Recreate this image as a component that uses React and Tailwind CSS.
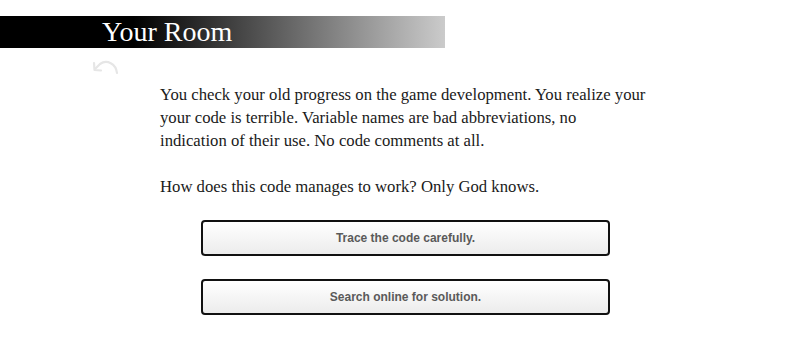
const CHOICES = ["Trace the code carefully.", "Search online for solution."];

function UndoIcon() {
  return (
    <svg width="30" height="22" viewBox="0 0 30 22" fill="none" stroke="#e6e6e6" strokeWidth="2.2" strokeLinecap="round" strokeLinejoin="round">
      <path d="M26 17 C25 8 16 3 9 8 L4 13" />
      <path d="M3 7 L3.5 14 L10 14.5" />
    </svg>
  );
}

export default function App() {
  return (
    <div className="w-[803px] h-[353px] bg-white overflow-hidden">
      {/* Title bar */}
      <div className="mt-4 w-[445px] h-8 bg-[linear-gradient(to_right,#000_0%,#000_30%,#cbcbcb_100%)] flex items-center">
        <h1 className="pl-[102px] text-white text-[28px] leading-8 font-['Liberation_Serif',serif]">Your Room</h1>
      </div>

      <div className="pl-[91px] pt-[8px] h-[22px]">
        <UndoIcon />
      </div>

      {/* Story text */}
      <div className="pl-[160px] pt-[13px] w-[660px] text-[16.7px] leading-[23px] text-[#1a1a1a] font-['Liberation_Serif',serif]">
        <p>
          You check your old progress on the game development. You realize your
          <br />
          your code is terrible. Variable names are bad abbreviations, no
          <br />
          indication of their use. No code comments at all.
        </p>
        <p className="mt-[23px]">How does this code manages to work? Only God knows.</p>
      </div>

      {/* Choices */}
      <div className="pl-[201px] pt-[22px] flex flex-col gap-[23px]">
        {CHOICES.map((label) => (
          <button
            key={label}
            className="w-[409px] h-[36px] rounded-[4px] border-2 border-[#111] bg-[linear-gradient(to_bottom,#ffffff,#ececec)] text-[12px] font-bold text-[#5a5a5a] font-['Liberation_Sans',Arial,sans-serif]"
          >
            {label}
          </button>
        ))}
      </div>
    </div>
  );
}
